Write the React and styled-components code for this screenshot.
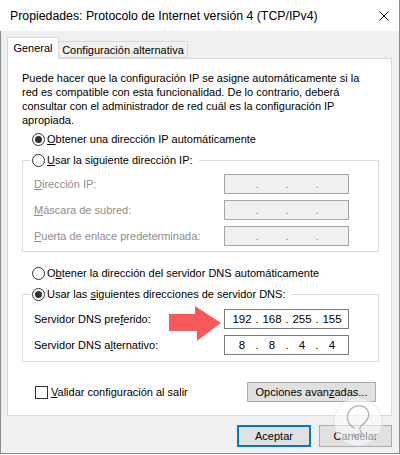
import React from 'react';
import styled, { createGlobalStyle } from 'styled-components';

const GlobalStyle = createGlobalStyle`
  html, body { margin: 0; padding: 0; background: #fff; }
  body {
    font-family: "Liberation Sans", Arial, sans-serif;
    font-size: 11px;
    color: #000;
  }
  * { box-sizing: border-box; }
`;

const Window = styled.div`
  position: relative;
  width: 400px;
  height: 454px;
  display: flex;
  flex-direction: column;
  border-right: 1px solid #8c8c8c;
  border-bottom: 1px solid #8c8c8c;
`;

const TitleBar = styled.div`
  height: 31px;
  flex: none;
  display: flex;
  align-items: center;
  justify-content: space-between;
  padding: 0 10px 0 10px;
  background: #fff;
  font-size: 12.3px;
`;

const Body = styled.div`
  flex: 1;
  display: flex;
  flex-direction: column;
  background: #f0f0f0;
  border-left: 1px solid #8c8c8c;
  padding: 6px 7px 6px 6px;
`;

const Tabs = styled.div`
  display: flex;
  align-items: flex-end;
  height: 21px;
`;

const Tab = styled.div`
  display: flex;
  align-items: center;
  justify-content: center;
  width: ${p => p.$w}px;
  height: ${p => (p.$active ? 22 : 17)}px;
  margin-bottom: ${p => (p.$active ? -1 : 0)}px;
  background: ${p => (p.$active ? '#fff' : '#f0f0f0')};
  border: 1px solid #d9d9d9;
  border-bottom: ${p => (p.$active ? 'none' : '1px solid #d9d9d9')};
  border-left: ${p => (p.$active ? '1px solid #d9d9d9' : 'none')};
  position: relative;
  z-index: ${p => (p.$active ? 1 : 0)};
  padding-bottom: ${p => (p.$active ? 2 : 0)}px;
`;

const Panel = styled.div`
  height: 358px;
  display: flex;
  flex-direction: column;
  background: #fff;
  border: 1px solid #d9d9d9;
  padding: 12px 12px 0 14px;
`;

const Intro = styled.p`
  margin: 0;
  line-height: 14px;
  white-space: nowrap;
`;

const RadioRow = styled.div`
  display: flex;
  align-items: center;
  gap: 2px;
  height: 16px;
  margin-top: ${p => p.$mt || 0}px;
  padding-left: ${p => p.$pl ?? 10}px;
  white-space: nowrap;
`;

const Radio = styled.span`
  width: 13px;
  height: 13px;
  flex: none;
  border-radius: 50%;
  border: 1px solid #333;
  background: #fff;
  display: inline-flex;
  align-items: center;
  justify-content: center;
  &::after {
    content: '';
    display: ${p => (p.$checked ? 'block' : 'none')};
    width: 7px;
    height: 7px;
    border-radius: 50%;
    background: #333;
  }
`;

const Group = styled.fieldset`
  margin: 5px 0 0 0;
  min-width: 0;
  border: 1px solid #dcdcdc;
  padding: ${p => p.$pt}px 29px ${p => p.$pb}px 11px;
  display: flex;
  flex-direction: column;
  gap: 6px;
`;

const Legend = styled.legend`
  padding: 0 6px 0 1px;
  margin-left: -3px;
`;

const FieldRow = styled.div`
  display: flex;
  align-items: center;
  justify-content: space-between;
  height: 20px;
  color: ${p => (p.$disabled ? '#8d8d8d' : '#000')};
`;

const Field = styled.div`
  position: relative;
  width: 125px;
  height: 20px;
  display: flex;
  align-items: center;
  padding: 0 3px 0 4px;
  border: 1px solid ${p => (p.$disabled ? '#a6a6a6' : '#7a7a7a')};
  background: ${p => (p.$disabled ? '#f0f0f0' : '#fff')};
  color: ${p => (p.$disabled ? '#8d8d8d' : '#000')};
  font-size: 11.5px;
`;

const Seg = styled.span`
  width: 26px;
  text-align: center;
`;

const Dot = styled.span`
  width: 4px;
  text-align: center;
`;

const Arrow = styled.svg`
  position: absolute;
  right: calc(100% + 2px);
  top: -4px;
`;

const Footer = styled.div`
  display: flex;
  align-items: center;
  justify-content: space-between;
  height: 20px;
  margin-top: 20px;
  padding: 0 3px 0 13px;
`;

const Check = styled.label`
  display: flex;
  align-items: center;
  gap: 3px;
`;

const Box = styled.span`
  width: 13px;
  height: 13px;
  border: 1px solid #333;
  background: #fff;
`;

const Button = styled.button`
  width: ${p => p.$w}px;
  height: ${p => p.$h || 20}px;
  padding: 0;
  font-family: inherit;
  font-size: 11px;
  color: #000;
  background: #e1e1e1;
  border: ${p => (p.$primary ? '2px solid #0078d7' : '1px solid #adadad')};
`;

const Buttons = styled.div`
  display: flex;
  justify-content: flex-end;
  gap: 8px;
  margin-top: 9px;
`;

const Mark = styled.svg`
  position: absolute;
  left: 333px;
  top: 397px;
`;

const IpField = ({ parts, disabled, arrow }) => (
  <Field $disabled={disabled}>
    {arrow && (
      <Arrow width="54" height="36" viewBox="0 0 54 36">
        <polygon points="0,8 26,8 26,0 52,17 28,35 28,25 0,25" fill="#f65a5b" />
      </Arrow>
    )}
    <Seg>{parts[0]}</Seg>
    <Dot>.</Dot>
    <Seg>{parts[1]}</Seg>
    <Dot>.</Dot>
    <Seg>{parts[2]}</Seg>
    <Dot>.</Dot>
    <Seg>{parts[3]}</Seg>
  </Field>
);

const empty = ['', '', '', ''];

export default function App() {
  return (
    <>
      <GlobalStyle />
      <Window>
        <TitleBar>
          <span>Propiedades: Protocolo de Internet versión 4 (TCP/IPv4)</span>
          <svg width="10" height="10" viewBox="0 0 10 10">
            <path d="M0.5 0.5 L9.5 9.5 M9.5 0.5 L0.5 9.5" stroke="#000" strokeWidth="1" />
          </svg>
        </TitleBar>
        <Body>
          <Tabs>
            <Tab $active $w={52}>General</Tab>
            <Tab $w={129}>Configuración alternativa</Tab>
          </Tabs>
          <Panel>
            <Intro>
              Puede hacer que la configuración IP se asigne automáticamente si la<br />
              red es compatible con esta funcionalidad. De lo contrario, deberá<br />
              consultar con el administrador de red cuál es la configuración IP<br />
              apropiada.
            </Intro>
            <RadioRow $mt={4}>
              <Radio $checked />
              <span><u>O</u>btener una dirección IP automáticamente</span>
            </RadioRow>
            <Group $pt={6} $pb={5}>
              <Legend>
                <RadioRow $pl={0}>
                  <Radio />
                  <span><u>U</u>sar la siguiente dirección IP:</span>
                </RadioRow>
              </Legend>
              <FieldRow $disabled>
                <span><u>D</u>irección IP:</span>
                <IpField parts={empty} disabled />
              </FieldRow>
              <FieldRow $disabled>
                <span><u>M</u>áscara de subred:</span>
                <IpField parts={empty} disabled />
              </FieldRow>
              <FieldRow $disabled>
                <span><u>P</u>uerta de enlace predeterminada:</span>
                <IpField parts={empty} disabled />
              </FieldRow>
            </Group>
            <RadioRow $mt={13}>
              <Radio />
              <span>O<u>b</u>tener la dirección del servidor DNS automáticamente</span>
            </RadioRow>
            <Group $pt={7} $pb={6}>
              <Legend>
                <RadioRow $pl={0}>
                  <Radio $checked />
                  <span>Usar las <u>s</u>iguientes direcciones de servidor DNS:</span>
                </RadioRow>
              </Legend>
              <FieldRow>
                <span>Servidor DNS pre<u>f</u>erido:</span>
                <IpField parts={['192', '168', '255', '155']} arrow />
              </FieldRow>
              <FieldRow>
                <span>Servidor DNS a<u>l</u>ternativo:</span>
                <IpField parts={['8', '8', '4', '4']} />
              </FieldRow>
            </Group>
            <Footer>
              <Check>
                <Box />
                <span><u>V</u>alidar configuración al salir</span>
              </Check>
              <Button $w={129}>Opciones avan<u>z</u>adas...</Button>
            </Footer>
          </Panel>
          <Buttons>
            <Button $primary $w={74} $h={22}>Aceptar</Button>
            <Button $w={73} $h={22}>Cancelar</Button>
          </Buttons>
        </Body>
        <Mark width="50" height="50" viewBox="0 0 50 50">
          <circle cx="25" cy="25" r="24" fill="rgba(255,255,255,0.55)" stroke="rgba(210,214,222,0.6)" />
          <path
            d="M22 31 C14 28 12 18 18 12 C23 7 32 8 35 14 C38 21 32 26 28 29 C26 31 27 34 29 36 C26 36 24 38 25 41 C22 40 20 38 21 36"
            fill="none"
            stroke="rgba(110,125,150,0.6)"
            strokeWidth="1.2"
          />
        </Mark>
      </Window>
    </>
  );
}
